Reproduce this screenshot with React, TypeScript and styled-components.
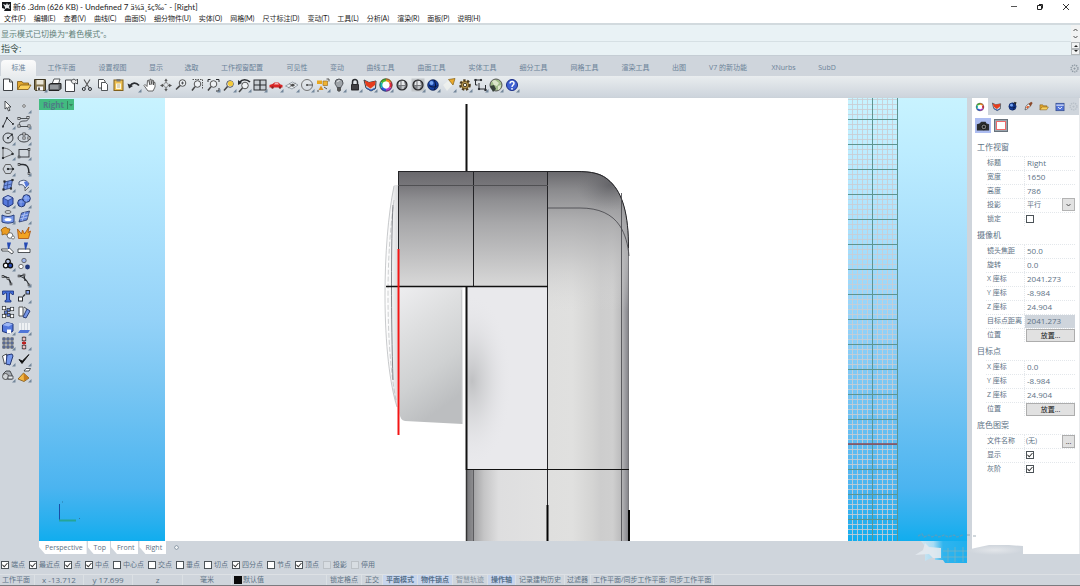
import React, { ReactNode } from 'react';
import styled, { createGlobalStyle, css } from 'styled-components';

const c = {
  chrome: '#cfd5dc',
  ink: '#5d7285',
  tab: '#6b8298',
  line: '#e3e7eb',
};

const Global = createGlobalStyle`
  * { box-sizing: border-box; }
  body { margin: 0; background: ${c.chrome}; }
  body, button, input, select {
    font-family: "Open Sans", "Noto Sans CJK SC", sans-serif;
    font-size: 7px;
    line-height: 10px;
    color: ${c.ink};
  }
  button, input, select { margin: 0; padding: 0; border: 0; background: none; outline: none; }
  h1, h2 { margin: 0; font-weight: 400; }
`;

const Page = styled.div`
  display: flex;
  flex-direction: column;
  min-height: 100vh;
  border-bottom: 1px solid #7b7b80;
`;

/* ---------- title and menus ---------- */

const TitleBar = styled.header`
  display: flex;
  align-items: center;
  height: 13px;
  padding: 0 10px 0 2px;
  gap: 2px;
  background: #fff;
  color: #222;
`;
const Title = styled.h1`
  flex: 1;
  font-family: Lato, "Noto Sans CJK SC", sans-serif;
  font-size: 8px;
  line-height: 12px;
  white-space: nowrap;
`;
const WindowButtons = styled.div`
  display: flex;
  gap: 18px;
`;
const WindowButton = styled.button`
  display: flex;
  width: 8px;
  height: 12px;
  align-items: center;
`;
const MenuBar = styled.nav`
  display: flex;
  height: 12px;
  padding: 0 4px;
  gap: 8px;
  align-items: center;
  background: #fff;
  border-bottom: 2px solid #d2dade;
`;
const MenuItem = styled.button`
  font-family: Lato, "Noto Sans CJK SC", sans-serif;
  color: #1c1c1c;
  white-space: nowrap;
`;

/* ---------- command area ---------- */

const CommandArea = styled.section`
  display: grid;
  grid-template-columns: 1fr 9px;
  background: #e9f2f5;
  border-bottom: 1px solid #c5cdd4;
`;
const History = styled.div`
  height: 17px;
  padding: 3px 1px;
  font-size: 8px;
  line-height: 12px;
  color: #5f7f78;
  border-bottom: 1px solid #d6e0e4;
`;
const Prompt = styled.label`
  display: flex;
  align-items: center;
  height: 13px;
  padding: 0 1px;
  gap: 3px;
  font-size: 9px;
  color: #42544f;
`;
const PromptInput = styled.input`
  flex: 1;
  font-size: 8px;
`;
const Stepper = styled.div<{ $framed?: boolean }>`
  display: grid;
  grid-template-rows: 1fr 1fr;
  padding: ${p => (p.$framed ? '0' : '1px 0')};
  background: #f1f2f2;
`;
const StepButton = styled.button<{ $framed?: boolean }>`
  display: grid;
  place-items: center;
  overflow: hidden;
  ${p => p.$framed && css`border: 1px solid #b5b8ba;`}
`;

/* ---------- toolbars ---------- */

const TabStrip = styled.div`
  display: flex;
  align-items: flex-end;
  height: 20px;
  padding: 0 1px;
`;
const ToolTab = styled.button<{ $w: number; $active?: boolean }>`
  width: ${p => p.$w}px;
  height: 16px;
  color: ${c.tab};
  white-space: nowrap;
  ${p => p.$active && css`
    border-radius: 4px 4px 0 0;
    background: linear-gradient(#fbfbfb, #e9ecee);
  `}
`;
const TabFill = styled.div`flex: 1;`;
const GearButton = styled.button`
  display: grid;
  place-items: center;
  width: 10px;
  height: 16px;
`;
const TopTools = styled.div`
  height: 22px;
  background: linear-gradient(#e9edef, #cdd4dc);
  border-bottom: 1px solid #cbd2d9;
`;
const TopToolGrid = styled.div`
  display: grid;
  grid-template-columns: repeat(33, 1fr);
  width: 520px;
  padding-top: 1px;
`;
const Tool = styled.button`
  display: grid;
  place-items: center;
  min-width: 0;
  min-height: 0;
  svg { display: block; }
`;
const Workspace = styled.main`
  display: grid;
  grid-template-columns: 39px 1fr 108px;
  flex: 1;
  min-height: 456px;
`;
const SideTools = styled.aside`
  display: grid;
  grid-template-columns: 16px 16px;
  grid-template-rows: repeat(18, minmax(0, 1fr));
  height: 285px;
`;

/* ---------- viewport ---------- */

const ViewColumn = styled.section`
  display: flex;
  flex-direction: column;
  min-width: 0;
  padding-right: 5px;
`;
const Viewport = styled.div`
  position: relative;
  flex: 1;
  min-height: 443px;
  background: #fff;
`;
const Scene = styled.svg`
  position: absolute;
  inset: 0;
  width: 100%;
  height: 100%;
`;
const ViewLabel = styled.button`
  position: absolute;
  left: 0;
  top: 1px;
  display: flex;
  align-items: center;
  justify-content: space-between;
  width: 35px;
  height: 11px;
  padding: 0 1px 0 4px;
  background: #42bb80;
  color: #4f7c86;
  font-size: 8px;
  font-weight: 700;
`;
const ViewTabs = styled.div`
  display: flex;
  height: 13px;
`;
const ViewTab = styled.button`
  height: 13px;
  padding: 0 4px 0 6px;
  margin-right: 1px;
  background: #fff;
  clip-path: polygon(0 0, 100% 0, 100% 100%, 6px 100%, 0 6px);
`;
const AddView = styled.button`
  display: grid;
  place-items: center;
  width: 18px;
`;

/* ---------- property panel ---------- */

const Panel = styled.aside`
  display: flex;
  flex-direction: column;
  background: #fff;
  border-right: 1px solid #e8eaec;
`;
const PanelTabs = styled.div`
  display: flex;
  height: 17px;
  background: ${c.chrome};
`;
const PanelTab = styled.button<{ $active?: boolean }>`
  display: grid;
  place-items: center;
  width: 16px;
  height: 17px;
  background: ${p => (p.$active ? '#fff' : 'transparent')};
`;
const PanelGear = styled.button`
  display: grid;
  place-items: center;
  width: 11px;
  opacity: .35;
`;
const ModeBar = styled.div`
  display: flex;
  gap: 2px;
  padding: 3px 3px 5px;
`;
const ModeButton = styled.button<{ $active?: boolean }>`
  display: grid;
  place-items: center;
  width: 16px;
  height: 15px;
  background: ${p => (p.$active ? '#adbdf1' : 'transparent')};
`;
const Group = styled.section``;
const GroupTitle = styled.h2`
  height: 18px;
  padding: 3px 5px;
  font-size: 8px;
  line-height: 12px;
`;
const Row = styled.div`
  display: grid;
  grid-template-columns: 39px 50px;
  height: 14px;
  margin: 0 4px 0 14px;
  border-top: 1px dotted ${c.line};
`;
const RowLabel = styled.label`
  padding: 1px 0 0 1px;
  border-right: 1px dotted ${c.line};
  white-space: nowrap;
`;
const Cell = styled.div<{ $shade?: boolean }>`
  position: relative;
  display: flex;
  align-items: center;
  height: 13px;
  background: ${p => (p.$shade ? '#cfd5dc' : 'transparent')};
  padding: 0 0 1px 1px;
`;
const Field = styled.input`
  width: 46px;
  padding-left: 1px;
  font-size: 8px;
`;
const Choice = styled.select`
  appearance: none;
  width: 48px;
  height: 12px;
  padding-left: 1px;
`;
const Badge = styled.span`
  position: absolute;
  right: 0;
  top: -1px;
  display: grid;
  place-items: center;
  width: 13px;
  height: 13px;
  border: 1px solid #b3b3b3;
  background: #e2e2e2;
  pointer-events: none;
`;
const PushButton = styled.button<{ $small?: boolean }>`
  width: ${p => (p.$small ? '13px' : '49px')};
  height: 13px;
  margin-left: ${p => (p.$small ? 'auto' : '0')};
  flex: none;
  border: 1px solid #adadad;
  background: #e1e1e1;
  color: #151515;
  line-height: 9px;
`;
const Tick = styled.input.attrs({ type: 'checkbox' })`
  appearance: none;
  display: grid;
  place-items: center;
  flex: none;
  width: 8px;
  height: 8px;
  border: 1px solid #4c5358;
  background: #fff;
  &:checked::before {
    content: "";
    width: 6px;
    height: 5px;
    background: #333;
    clip-path: polygon(0 50%, 12% 38%, 38% 72%, 90% 0, 100% 12%, 38% 100%);
  }
  &:disabled { border-color: #bcc1c6; background: #d8dde2; }
`;
const PanelFoot = styled.div`
  flex: 1;
`;
const SmudgeArt = styled.svg`
  position: absolute;
  right: -60px;
  bottom: -24px;
  width: 120px;
  height: 36px;
  pointer-events: none;
`;

/* ---------- footer ---------- */

const SnapBar = styled.div`
  display: flex;
  align-items: center;
  height: 20px;
  padding: 2px 1px 0;
  gap: 4px;
`;
const Snap = styled.label`
  display: flex;
  align-items: center;
  gap: 2px;
  white-space: nowrap;
`;
const StatusBar = styled.footer`
  display: flex;
  height: 11px;
  border-top: 1px solid #dde1e5;
  overflow: hidden;
`;
const StatusCell = styled.button<{ $w?: number; $on?: boolean; $dim?: boolean; $left?: boolean; $num?: boolean }>`
  display: flex;
  align-items: center;
  justify-content: ${p => (p.$left ? 'flex-start' : 'center')};
  gap: 1px;
  width: ${p => (p.$w ? `${p.$w}px` : 'auto')};
  padding: ${p => (p.$left ? '0 2px' : '0')};
  border-right: 1px solid #dbe0e4;
  white-space: nowrap;
  ${p => p.$num && css`font-size: 8px;`}
  ${p => p.$on && css`background: #c7d5ed; font-weight: 700; color: #56708a;`}
  ${p => p.$dim && css`color: #8593a0;`}
`;
const Swatch = styled.span`
  width: 8px;
  height: 8px;
  background: #0a0a0a;
`;

/* ---------- icons ---------- */

const K = '#2a2d31';
const B = '#5478dc';
const flyout = <path d="M15.5 12v3.5H12z" fill="#72869a" />;
const s = (d: string, color = K, w = 1) => <path d={d} stroke={color} strokeWidth={w} fill="none" />;
const dots = (pts: number[][], r = 1, f = '#fff') => pts.map(([x, y], i) => (
  <rect key={i} x={x - r} y={y - r} width={r * 2} height={r * 2} fill={f} stroke={K} strokeWidth=".7" />
));
const lens = (x: number, y: number) => (
  <g><circle cx={x} cy={y} r="3.3" fill="#eef1f4" stroke="#444" strokeWidth=".9" /><path d={`M${x - 2.5} ${y + 2.6}L3 ${y + 6.500}`} stroke="#444" strokeWidth="1.5" /></g>
);
const shield = (
  <g><path d="M2 3l5 2.5L14 4l-.5 7.500L9 14 4 11z" fill="#d4d7da" stroke="#303a44" /><path d="M2.500 3.500l4.500 2 6.500-1.500-.5 4L8.500 11.500 4 8.500z" fill="#e63c1c" /><path d="M4.500 11l4.500 2.300 4-2" stroke="#315fb4" strokeWidth="1.400" fill="none" /></g>
);
const wheel = (
  <g fill="none" strokeWidth="2.8">
    <path d="M8 3a5 5 0 0 1 4.300 2.500" stroke="#f08a1d" /><path d="M12.300 5.500a5 5 0 0 1 0 5" stroke="#e22a3a" />
    <path d="M12.300 10.500A5 5 0 0 1 8 13" stroke="#b03ad0" /><path d="M8 13a5 5 0 0 1-4.300-2.500" stroke="#2b58e0" />
    <path d="M3.700 10.500a5 5 0 0 1 0-5" stroke="#17b6ae" /><path d="M3.700 5.500A5 5 0 0 1 8 3" stroke="#4cbb2d" />
    <circle cx="8" cy="8" r="6.200" stroke="#333" strokeWidth=".7" /><circle cx="8" cy="8" r="3.400" fill="#fff" stroke="none" />
  </g>
);
const ball = (
  <g><circle cx="8" cy="8" r="5" fill="#77797d" stroke="#2a2a2c" strokeWidth="1.200" /><path d="M7.500 4h2.500l1 4H7.500zM5 5l1.500-.5V8H4.500z" fill="#e6e8ea" /><path d="M7.500 9h3.500l-1.500 3h-2z" fill="#c3c6c9" /><path d="M4.500 9h2v3z" fill="#94979b" /></g>
);
const blueBall = (
  <g><circle cx="8" cy="8" r="5.300" fill="#17409f" stroke="#0b1d4e" strokeWidth=".8" /><circle cx="6.500" cy="6" r="2" fill="#76a4f2" /><path d="M4 8.500c3 2 6 2 8.500 0M9 3c2 3 2 7 0 10" stroke="#071338" strokeWidth="1" fill="none" /></g>
);
const folder = (
  <g><path d="M1.500 12.500v-8h4.500l1 1.500h5.500v2" fill="#e2a72e" stroke="#7c5511" strokeWidth=".8" /><path d="M1.500 12.500L4.500 8H15l-2.800 4.500z" fill="#fbd15c" stroke="#7c5511" strokeWidth=".8" /></g>
);
const page = (x = 3.5, y = 2) => <path d={`M${x} ${y}h6l3 3v8.500h-9z`} fill="#fff" stroke={K} strokeWidth=".9" />;
const gear = (r: number, col: string, fill = 'none') => (
  <g><circle cx="8" cy="8" r={r} fill={fill} stroke={col} strokeWidth="2.600" strokeDasharray="2.200 1.600" /><circle cx="8" cy="8" r={r - 1} fill={fill} stroke={col} strokeWidth=".8" /></g>
);

const topIcons: [string, ReactNode, boolean?][] = [
  ['新建', <g>{page()}{s('M9.500 2v3h3', K, .8)}</g>],
  ['打开', folder],
  ['保存', <g><path d="M2.500 2.500h11v11h-10l-1-1z" fill="#84754f" stroke="#3b3522" /><path d="M4.500 3h7v4.500h-7z" fill="#e9e5d6" /><path d="M5 9.500h6v4H5z" fill="#f6f6f6" /><path d="M6 10.500h2v2.500H6z" fill="#555" /></g>, true],
  ['打印', <g><path d="M5 7l2-5h6l-1.500 5" fill="#fff" stroke={K} strokeWidth=".8" /><path d="M2 7.500l2-1h10v5l-2 2H2z" fill="#5f6367" stroke="#222" /><path d="M3 9h8.500M3 11h8.500" stroke="#d6dade" strokeWidth=".9" /></g>],
  ['属性', <g>{page(2.5, 3)}<path d="M8 3.500l3-1.500 2 1.500 1.500-1.500v5l-2-1-2 1-2-2z" fill="#e9e9e9" stroke={K} strokeWidth=".8" /></g>],
  ['剪切', <g>{s('M5 2.500l5 8M11 2.500l-5 8', '#555', 1.1)}<circle cx="4.800" cy="12" r="1.500" fill="none" stroke={K} /><circle cx="11" cy="12" r="1.500" fill="none" stroke={K} /></g>],
  ['复制', <g><path d="M3.500 2.500h5l1.500 1.500v7H3.500z" fill="#fff" stroke={K} strokeWidth=".8" /><path d="M6.500 5.500h4l2 2v6h-6z" fill="#fff" stroke={K} strokeWidth=".8" /></g>],
  ['粘贴', <g><rect x="4" y="3" width="9" height="10.500" fill="#eec052" stroke="#80601c" /><rect x="6.500" y="2" width="4" height="2.500" fill="#777" /><path d="M6 6.500h5v5.500H6z" fill="#fff8da" /><path d="M7 8h3M7 10h3" stroke="#888" strokeWidth=".6" /></g>],
  ['撤销', <g>{s('M4 9c2-3.500 6-4 9-.5', K, 1.800)}<path d="M1.500 6.500l1.500 5 4-2.500z" fill={K} /></g>, true],
  ['平移', <path d="M5 9.500L3 7.500 2 8.500 6 14h5l2-4V5.500l-1-.5-.5 3V3.500l-1.200-.5-.5 4.500L9 2 7.800 2.500 8 8 6.500 3l-1 .5z" fill="#fff" stroke="#444" strokeWidth=".8" />],
  ['旋转视图', <g>{s('M8 3v10M3 8.500h10', '#555', 1)}<path d="M8 1.500l1.700 2.500H6.300zM8 14.500l1.700-2.500H6.300zM2 8.500l3-1.700v3.400zM14 8.500l-3-1.700v3.400z" fill="#555" /><circle cx="8" cy="8" r="2.300" fill="#e1e6ea" stroke="#777" strokeWidth=".7" /></g>],
  ['动态缩放', <g>{lens(9.5, 6)}{s('M8 6h3M9.500 4.500v3', K, .7)}</g>],
  ['框选缩放', <g><path d="M3.500 2.500h10v9" stroke="#555" strokeDasharray="1.500 1" fill="none" />{lens(8.5, 7)}</g>],
  ['缩放至范围', <g>{s('M3 5V2.500h2.500M11 2.500h3V5M14 11v3h-3', K, 1)}{lens(8.5, 7)}</g>, true],
  ['缩放至选取', <g>{lens(9, 7)}<circle cx="9.500" cy="6.500" r="2.600" fill="#f4c93a" /></g>, true],
  ['复原视图', <g>{lens(9, 8.5)}{s('M4 5c2-3 7-3 10 0', K, 1.700)}<path d="M2 3v5l4-2z" fill={K} /></g>, true],
  ['四视图', <g><rect x="2" y="3" width="12" height="10" fill="#c8ced3" stroke={K} />{s('M8 3v10M2 8h12', K, 1.200)}</g>, true],
  ['车', <g><path d="M1.500 8l3-1 2-1.500h4l2 2 2 .5v2.500h-13z" fill="#d92424" /><path d="M7 6h3l1 1.500H6z" fill="#f5b7b7" /><circle cx="4.500" cy="10.500" r="1.200" fill="#822" /><circle cx="12" cy="10.500" r="1.200" fill="#822" /></g>, true],
  ['工作平面', <g><path d="M1.500 9l7-4 5.500 3-6 4z" fill="#e9edf0" stroke="#7e8891" strokeWidth=".7" />{s('M4 11l8-5M5 6.500l6 4.500', '#777', .7)}<path d="M6 8l3-1.500 2 2-3 1z" fill="#4a4a4a" /></g>, true],
  ['圆', <g><circle cx="8" cy="8" r="5.500" fill="none" stroke="#777" />{s('M8 8h6', '#555', 1)}<circle cx="8" cy="8" r="1" fill="#444" /></g>, true],
  ['物件', <g><path d="M2 3.500h5v3.500H2z" fill="#e8a61d" /><path d="M8 4h4.500v4.500H8z" fill="#efb234" stroke="#946414" strokeWidth=".6" /><path d="M6 8.500l2.500 4.500H3.500z" fill="#e0911a" />{s('M11.500 2H14v2.500M2 14h2M9 10l3 2', '#444', .9)}</g>, true],
  ['灯光', <g><path d="M4 6a4 4 0 0 1 8 0c0 2-2 3-2 4.500H6C6 9 4 8 4 6z" fill="#9fa4a9" stroke="#4c5055" /><path d="M6.500 5c.5-1 1-1.500 2-1.500" stroke="#fff" fill="none" /><path d="M6 11h4v2.500L8 15l-2-1.500z" fill="#555" /></g>, true],
  ['锁定', <g>{s('M5.500 7V5a2.500 2.500 0 0 1 5 0v2', K, 1.500)}<rect x="4" y="7" width="8" height="6.500" rx=".8" fill="#2c2c2f" /><path d="M5 9h6M5 11h6" stroke="#777" strokeWidth=".6" /></g>, true],
  ['图层', shield, true],
  ['颜色', wheel, true],
  ['着色', ball],
  ['着色模式', <g><rect x="1.500" y="1.500" width="13" height="13" fill="#c2c6c9" />{ball}</g>, true],
  ['渲染', blueBall, true],
  ['聚光灯', <g><path d="M2 8l6-5 4 4-6 7z" fill="#f4f5f0" opacity=".7" /><path d="M7.500 2.500l6.500-1L12 8z" fill="#eba92a" stroke="#805d15" strokeWidth=".7" /></g>, true],
  ['选项', <g>{gear(4.5, '#4c3c20', '#dcb65b')}<circle cx="8" cy="8" r="1.800" fill="#f1eee1" stroke="#3d321e" /></g>, true],
  ['尺寸', <g>{s('M2.500 3h5.500M2.500 3v5h2M6 6v6h6.500M12.500 8v5', K, 1)}{dots([[2.5, 3], [8, 3], [6, 12], [12.5, 13]], .7, K)}</g>, true],
  ['地球', <g><circle cx="8" cy="8" r="6" fill="#a2bd8b" stroke="#555" /><path d="M4 4l3-1 4 3-2 3-3-1zM10 9l3-1-1 4-2 1z" fill="#dce5cb" /><path d="M2 9l4-1 2 4-3 3z" fill="#37413a" /></g>, true],
  ['说明', <g><circle cx="8" cy="8" r="5.500" fill="#3f60d2" stroke="#1a2d86" />{s('M6 6.500c0-3 4.500-2.500 4 0C9.700 8 8 8 8 10', '#fff', 1.400)}<circle cx="8" cy="11.800" r=".9" fill="#fff" /></g>, true],
];

const sideIcons: [string, ReactNode, boolean?][] = [
  ['选取', <path d="M5 3v8l2-1.500L8.500 13l1.500-.7L8.500 9H11z" fill="#f8f8f8" stroke={K} strokeWidth=".8" />],
  ['点', <circle cx="8" cy="8" r="1.300" fill="#fff" stroke="#555" strokeWidth=".8" />, true],
  ['多重直线', <g>{s('M3 12.500L7 4l6 6', K, .9)}{dots([[3, 12.5], [7, 4], [13, 10]], .6, K)}</g>, true],
  ['曲线', <g>{s('M3 4.500h8.500M3 12.500h9.500M4 12c-2-4 1-5 4-5 4 0 4-1 4.500-3', K, .8)}{dots([[3, 4.5], [12, 3.500], [3, 12], [13, 12]], 1.1)}</g>, true],
  ['圆形', <g><circle cx="8" cy="8" r="5" fill="none" stroke={K} strokeWidth=".9" />{s('M8 8l4-3.500', K, .9)}{dots([[8, 8], [12, 4.500]], .6, K)}</g>, true],
  ['椭圆', <g><ellipse cx="8" cy="8" rx="6" ry="4" fill="none" stroke={K} strokeWidth=".9" />{dots([[8, 4], [8, 8], [13, 8]], 1.100)}</g>, true],
  ['圆弧', <g>{s('M3 13V3c5 0 9 3 10 6L3 13', '#555', .9)}{dots([[3, 3], [3, 13], [12.500, 9]], .7, K)}</g>, true],
  ['矩形', <g><rect x="3" y="4.500" width="10" height="7.500" fill="none" stroke={K} strokeWidth=".9" />{dots([[3, 12], [13, 4.500]], .9)}</g>, true],
  ['多边形', <g><path d="M3 8l2.500-4.500h5L13 8l-2.500 4.500h-5z" fill="none" stroke="#555" strokeWidth=".9" />{s('M8 8h5', K, .9)}{dots([[8, 8], [13, 8]], .7, K)}</g>, true],
  ['圆角', <g>{s('M3 3.500h4c4 0 6 2 6 9', K, 1.500)}{dots([[3, 3.500], [13, 12.500]], .9)}</g>, true],
  ['曲面', <g><path d="M4.500 5l8-2-1.500 8-7.500 2z" fill="#7596e8" stroke="#263b77" strokeWidth=".8" />{s('M3.500 9l8-2M8 4l-1 8', '#2f4788', .7)}{dots([[4.500, 4.500], [12.500, 3], [3.500, 12.500], [11, 11.500]], .7, K)}</g>, true],
  ['弯曲面', <g><path d="M3 5c4-3 8-2 10 2l-4 4C8 8 6 7 3 8z" fill="#e8edfa" stroke="#4b5874" /><path d="M8 5l3-1 2 4-3 2z" fill={B} />{s('M9 11v3l4-4', '#555', .8)}</g>, true],
  ['立方体', <g><path d="M3 5l5-2.500L13 5v6l-5 3-5-3z" fill={B} stroke="#20357e" /><path d="M3 5l5 2.500L13 5 8 2.500z" fill="#a7bdf6" stroke="#20357e" strokeWidth=".7" />{s('M8 7.500V14', '#20357e', .8)}</g>, true],
  ['布尔运算', <g><circle cx="5.500" cy="10" r="3.800" fill={B} stroke="#1e316c" /><circle cx="10.500" cy="5.500" r="3.800" fill="#6f93ee" stroke="#1e316c" />{s('M2.500 9h6M5 6.500v7M7.500 5h6M10 2v7', '#a9bff5', .6)}</g>, true],
  ['投影曲线', <g><ellipse cx="8" cy="3" rx="3" ry="1.500" fill="none" stroke="#555" strokeWidth=".8" /><path d="M2 6c4 2 8 2 12 0v7c-4 1.500-8 1.500-12 0z" fill="#7b9bed" stroke="#273e7d" /><ellipse cx="8" cy="10.500" rx="3.500" ry="1.600" fill="#fff" /></g>, true],
  ['网格', <g><path d="M5.500 4l8-2-2.500 9-8 2z" fill="#6485dc" stroke="#29396b" strokeWidth=".8" />{s('M4.500 7l8-2M3.500 10l8-2M9 3l-3 9', '#c3d1f8', .7)}</g>, true],
  ['炸开', <g><path d="M3 3l3-1 1 1.500L10 4l-1 3 1 2-3 1-2-1-3 1V7L1 5z" fill="#eb9c22" stroke="#7d4e0b" strokeWidth=".7" /><circle cx="10" cy="10.500" r="2.800" fill="#fff" stroke="#555" strokeWidth=".8" /><circle cx="13" cy="12.500" r="1.500" fill="#fff" stroke="#555" strokeWidth=".7" /></g>],
  ['爆炸', <path d="M2.500 13.500L1.500 4l4 5 1-4 2 4L13 2l-1 5.500 2.500-1.500-2 7.500z" fill="#f2a321" stroke="#a64e0c" strokeWidth=".8" />],
  ['修剪', <g><path d="M1.500 9h6l2-1 4 4-1.500 2-4-3h-6z" fill="#fff" stroke={K} strokeWidth=".8" /><path d="M7 2.500h4L9 9H8z" fill="#254ab4" /></g>],
  ['分割', <g><path d="M2 9h12v3.500H2z" fill="#fff" stroke={K} strokeWidth=".8" /><path d="M8 2.500h4l-2 7H9z" fill="#254ab4" /></g>],
  ['群组', <g><circle cx="8" cy="5.500" r="2.300" fill="#b8c6eb" stroke="#111" strokeWidth="1.200" /><circle cx="5.700" cy="9.500" r="2.300" fill="#fff" stroke="#111" strokeWidth="1.200" /><circle cx="10.300" cy="9.500" r="2.300" fill="#284cb5" stroke="#111" strokeWidth="1.200" /></g>, true],
  ['解散群组', <g><circle cx="8" cy="4.500" r="2.200" fill="#9eb4ed" stroke="#555" strokeWidth=".8" /><circle cx="5" cy="10.500" r="2.200" fill="#fff" stroke="#555" strokeWidth=".8" /><circle cx="11.500" cy="11" r="2.400" fill="#20377c" /></g>],
  ['编辑点', <g>{s('M3 4.500c5 0 7 3 8 8', K, 1.300)}{dots([[3, 4.500], [8, 6.500], [11, 12]], .9)}</g>],
  ['控制点', <g>{s('M3 4c5 1 8 4 10 9M8 3L3 4M8 3l1 6', K, 1.200)}{dots([[3, 4], [8, 3], [13, 13]], .9)}</g>, true],
  ['文字', <path d="M2.500 3h11v3.500H12L11 5H9.500v7l1.500.5V14H5v-1.500l1.500-.5V5H5L4 6.500H2.500z" fill="#456ed8" stroke="#18307a" strokeWidth=".8" />],
  ['移动', <g><rect x="2.500" y="9" width="4" height="4" fill="#fff" stroke={K} /><rect x="10" y="2.500" width="3.500" height="3.500" fill="#85a3f0" stroke={K} />{s('M7 8.500l2-2', K, 1.200)}</g>, true],
  ['阵列', <g>{dots([[4, 4], [12, 5], [4, 12], [12, 12]], 1.700)}{dots([[8.500, 6], [8.500, 11], [6, 8.500]], 1.500, '#5e80de')}</g>],
  ['旋转', <g><path d="M3 3h4v9H3z" fill="#fff" stroke="#555" /><path d="M7 13l4-8 3 2-4 7z" fill="#7696e7" stroke="#2c3d75" />{s('M8 3l3 2', K, .8)}</g>],
  ['抽面', <g><path d="M2.500 5L7 2.500 13 4v7l-4 2.500-6.500-2z" fill={B} stroke="#1c3277" /><path d="M2.500 5L7 2.500 13 4 8.500 6.500z" fill="#9db6f5" /><path d="M7 9.500h4v4H7z" fill="#fff" /></g>, true],
  ['法线', <g>{s('M4 3v8M7 3v8M10 3v8M13 3v8', '#fff', 1.300)}<path d="M2 13l2-3h10l-2 3z" fill="#4f75d7" /></g>, true],
  ['矩形阵列', <g>{dots([[4, 4], [8, 4], [12, 4], [4, 8], [8, 8], [12, 8], [4, 12], [8, 12], [12, 12]], 1.100, '#7c98e2')}</g>, true],
  ['对齐', <g>{s('M8 1.500v13', '#d22', 1.100)}{dots([[8, 4], [8, 12]], 1.800, '#eac1c1')}{s('M6 8h4', '#b22', 2)}</g>, true],
  ['弯曲', <g><path d="M2.500 5l4-2 1 8-3 2z" fill="#fff" stroke={K} strokeWidth=".8" /><path d="M7 4l5-1 1 2-3 9-4-1z" fill="#7698ec" stroke="#253873" /></g>, true],
  ['检查', <path d="M3 8.500L6 12.500 13 3.500 6.300 10z" fill="#111" stroke="#111" strokeWidth=".9" />, true],
  ['隐藏', <g><path d="M3 7l3-3h4l2 4v4H5z" fill="#a9aeb4" stroke={K} strokeWidth=".8" /><circle cx="5.500" cy="9.500" r="3" fill="#d1d5d8" stroke="#555" /><path d="M8 9h5v3H8z" fill="#e9ebed" stroke={K} strokeWidth=".7" /></g>, true],
  ['金字塔', <g><path d="M2 12l5.500-6L13 11l-5 3.500z" fill="#f3b643" stroke="#7b5416" strokeWidth=".8" /><path d="M7.500 6l.5 8 5-3z" fill="#c87e1c" /><path d="M8 4l2-2.500h4.500L13 4z" fill="#fff" stroke={K} strokeWidth=".8" /></g>, true],
];

const Icon = ({ children, fly, size = 16 }: { children: ReactNode; fly?: boolean; size?: number }) => (
  <svg width={size} height={size} viewBox="0 0 16 16" fill="none" aria-hidden="true">{children}{fly && flyout}</svg>
);

const Chevron = ({ up }: { up?: boolean }) => (
  <svg width="5" height="4" viewBox="0 0 5 4" fill="none"><path d={up ? 'M.5 3l2-2 2 2' : 'M.5 1l2 2 2-2'} stroke="#4c4c4c" /></svg>
);
const Arrow = ({ up }: { up?: boolean }) => (
  <svg width="4" height="3" viewBox="0 0 4 3"><path d={up ? 'M0 3l2-2 2 2z' : 'M0 0l2 2 2-2z'} fill="#222" /></svg>
);
const Cog = () => (
  <svg width="9" height="9" viewBox="0 0 16 16">{gear(6, '#8c97a2', '#d8dde2')}<circle cx="8" cy="8" r="2" fill="#8c97a2" /></svg>
);

/* ---------- 3D view ---------- */

const Stops = ({ list }: { list: [number, string, number?][] }) => (
  <>{list.map(([o, col, a], i) => <stop key={i} offset={o} stopColor={col} stopOpacity={a ?? 1} />)}</>
);
const range = (n: number) => Array.from({ length: n }, (_, i) => i);
const elbow = 'M548 171H576C592 171 602 173 610 181C623 193 629 215 629 248V541H548Z';

const Model = () => (
  <Scene viewBox="39 98 928 443" preserveAspectRatio="xMidYMid slice" role="img" aria-label="Right">
    <defs>
      <linearGradient id="sky" x1="0" y1="0" x2="0" y2="1"><Stops list={[[0, '#c8f3ff'], [.13, '#bcecff'], [.5, '#94d2f8'], [.65, '#79c6f3'], [.88, '#4bb4f0'], [.96, '#27afee'], [1, '#10adee']]} /></linearGradient>
      <linearGradient id="head" x1="0" y1="0" x2="0" y2="1"><Stops list={[[0, '#68676b'], [.12, '#77767a'], [.25, '#8f8f92'], [.45, '#a8a8aa'], [.7, '#bebebf'], [1, '#d9d9d9']]} /></linearGradient>
      <linearGradient id="pipe"><Stops list={[[0, '#dfdfde'], [.3, '#e0e0df'], [.55, '#d4d4d3'], [.65, '#cdcdcd'], [.8, '#cfcfcf'], [.9, '#bcbcbd'], [.96, '#98989d'], [1, '#7e7e83']]} /></linearGradient>
      <linearGradient id="elbowTop" x1="0" y1="0" x2="0" y2="1"><Stops list={[[0, '#68676b'], [.13, '#858588', .95], [.35, '#a6a6a8', .85], [.6, '#bdbdbe', .7], [1, '#d8d8d8', 0]]} /></linearGradient>
      <radialGradient id="elbowDark"><Stops list={[[0, '#55555a', .65], [1, '#77777a', 0]]} /></radialGradient>
      <radialGradient id="shadow"><Stops list={[[0, '#b9babc', .85], [.4, '#cbccce', .55], [1, '#e8e8ec', 0]]} /></radialGradient>
      <linearGradient id="foot"><Stops list={[[0, '#747477'], [.09, '#8d8d90'], [.1, '#a5a5a7'], [.22, '#c5c5c6'], [.4, '#dededf'], [1, '#e2e2e2']]} /></linearGradient>
      <linearGradient id="cap" x1="0" y1="0" x2=".35" y2="1"><Stops list={[[0, '#eeeef0'], [.35, '#dedfe0'], [.7, '#cfd1d2'], [1, '#bcbec0']]} /></linearGradient>
      <linearGradient id="disc"><Stops list={[[0, '#fff'], [.5, '#f6f6f7'], [1, '#d9dadc']]} /></linearGradient>
      <clipPath id="elbowClip"><path d={elbow} /></clipPath>
    </defs>
    <rect x="39" y="98" width="126" height="443" fill="url(#sky)" />
    <rect x="848" y="98" width="119" height="443" fill="url(#sky)" />
    <g stroke="#c9cdd2" strokeOpacity=".85">
      {range(9).map(i => <path key={i} d={`M${852.500 + i * 5} 98V541`} />)}
      {range(88).map(i => <path key={i} d={`M848 ${99.500 + i * 5}H897`} />)}
    </g>
    <g stroke="#5f948f">
      <path d="M872.500 98V541M897.500 98V541" />
      {range(17).map(i => <path key={i} d={`M848 ${119.500 + i * 25}H897`} />)}
      <path d="M848 444H897" stroke="#8a4a5c" strokeWidth="1.500" />
    </g>

    <path d="M59.500 504V521" stroke="#1a4fa6" /><path d="M59 520.500H76" stroke="#25a597" strokeWidth="2" />
    <path d="M62 502h1M79 518.500h1" stroke="#2b7aa6" />

    <path d="M394 185C388 215 385 255 385 295C385 345 390 385 397 407L398 185Z" fill="url(#disc)" />
    <g fill="none" stroke="#a8abae" strokeWidth=".9">
      <path d="M394 186C388 215 385 255 385 295C385 345 390 385 397 407" strokeOpacity=".7" />
      <path d="M394 200C390 230 388 260 388 295C388 340 391 375 396 400" strokeDasharray="5 2" strokeOpacity=".6" />
      <path d="M393 205C391 240 391 320 393 380" stroke="#777b80" />
    </g>
    <path d="M398 287H462.500V424L405 421Q400 420 399.500 413Z" fill="url(#cap)" />
    <path d="M461.500 290V422" stroke="#c5c7c9" strokeWidth=".8" />
    <rect x="467" y="287" width="81" height="182" fill="#e9e9ec" />
    <clipPath id="bodyClip"><rect x="467" y="287" width="81" height="182" /></clipPath>
    <ellipse cx="472" cy="381" rx="40" ry="86" fill="url(#shadow)" clipPath="url(#bodyClip)" />
    <rect x="466" y="470" width="82" height="71" fill="url(#foot)" />
    <path d={elbow} fill="url(#pipe)" />
    <g clipPath="url(#elbowClip)">
      <rect x="548" y="171" width="82" height="140" fill="url(#elbowTop)" />
      <ellipse cx="610" cy="185" rx="34" ry="26" fill="url(#elbowDark)" />
    </g>
    <rect x="398" y="171" width="150" height="116" fill="url(#head)" />
    <g fill="none" stroke="#242427">
      <path d="M466.500 104V171M466.500 287V470" stroke="#111" strokeWidth="2" />
      <path d="M466.500 470V541" stroke="#333" strokeWidth="1.500" />
      <path d="M398.500 171.500H576C592 171.500 602 173.500 610 181.500C623 193.500 628.500 215 628.500 248" />
      <path d="M628.500 248V541" stroke="#77777b" />
      <path d="M398.500 171V250M473.500 171V286M547.500 171V541" />
      <path d="M398 185.500H548" stroke="#505053" />
      <path d="M548 208H580C599 208 612 214 620 226C625 234 628 244 629 256M621.500 193V541" strokeWidth=".8" stroke="#424247" />
      <path d="M386 286.500H548" stroke="#111" strokeWidth="1.500" />
      <path d="M466 469.500H629" stroke="#111" />
      <path d="M473.500 470V541" stroke="#5b5b5e" />
      <path d="M547.500 505V541M629 510V541" stroke="#050505" strokeWidth="2" />
    </g>
    <path d="M398.500 249V435" stroke="#f31515" strokeWidth="2" />
  </Scene>
);

const Smudge = () => (
  <SmudgeArt viewBox="0 0 120 36" aria-hidden="true">
    <defs>
      <linearGradient id="patch"><Stops list={[[0, '#d9e6ee'], [.3, '#a8dcf4'], [.5, '#30b4ee'], [1, '#1fb0ee']]} /></linearGradient>
      <radialGradient id="haze"><Stops list={[[0, '#e3e6ea'], [1, '#cfd5dc']]} /></radialGradient>
    </defs>
    <path d="M14 12h46v22H38l-2-3h-8v-4l-10 5v-7h-6l8-5z" fill="url(#patch)" />
    <path d="M33 18v12M41 19v14M48 18v15M56 18v15M36 22h24M36 28h24" stroke="#7fb3bf" strokeWidth=".7" />
    <path d="M18 14l4 4 12 1v10h-8l-4-4-14 1 8-5z" fill="#e3e9ee" opacity=".9" />
    <path d="M60 21l8-2 14-3h20l14 1v9H60z" fill="url(#haze)" />
    <path d="M11 7l4-2 2 3 5-2 3 2 4-2 3 2 5-2 4 2 6-2 3 2 6-2M60 6h3M66 7h3" stroke="#8295a3" strokeWidth="1.500" strokeOpacity=".5" strokeDasharray="3 1" fill="none" />
  </SmudgeArt>
);

/* ---------- data ---------- */

const menus = ['文件(F)', '编辑(E)', '查看(V)', '曲线(C)', '曲面(S)', '细分物件(U)', '实体(O)', '网格(M)', '尺寸标注(D)', '变动(T)', '工具(L)', '分析(A)', '渲染(R)', '面板(P)', '说明(H)'];
const tabs: [string, number][] = [
  ['标准', 35], ['工作平面', 51], ['设置视图', 51], ['显示', 36], ['选取', 35], ['工作视窗配置', 66], ['可见性', 44], ['变动', 36],
  ['曲线工具', 51], ['曲面工具', 51], ['实体工具', 51], ['细分工具', 51], ['网格工具', 51], ['渲染工具', 51], ['出图', 36], ['V7 的新功能', 62], ['XNurbs', 49], ['SubD', 38],
];
const snaps: [string, boolean, boolean?][] = [
  ['端点', true], ['最近点', true], ['点', true], ['中点', true], ['中心点', false], ['交点', false], ['垂点', false],
  ['切点', false], ['四分点', true], ['节点', false], ['顶点', true], ['投影', false, true], ['停用', false, true],
];
type Kind = 'text' | 'select' | 'check' | 'place' | 'file';
const groups: [string, [string, string, Kind?][]][] = [
  ['工作视窗', [['标题', 'Right'], ['宽度', '1650'], ['高度', '786'], ['投影', '平行', 'select'], ['锁定', '', 'check']]],
  ['摄像机', [['镜头焦距', '50.0'], ['旋转', '0.0'], ['X 座标', '2041.273'], ['Y 座标', '-8.984'], ['Z 座标', '24.904'], ['目标点距离', '2041.273'], ['位置', '', 'place']]],
  ['目标点', [['X 座标', '0.0'], ['Y 座标', '-8.984'], ['Z 座标', '24.904'], ['位置', '', 'place']]],
  ['底色图案', [['文件名称', '(无)', 'file'], ['显示', 'on', 'check'], ['灰阶', 'on', 'check']]],
];

const Property = ({ id, label, value, kind = 'text' }: { id: string; label: string; value: string; kind?: Kind }) => (
  <Row>
    <RowLabel htmlFor={id}>{label}</RowLabel>
    <Cell $shade={label === '目标点距离'}>
      {kind === 'text' && <Field id={id} defaultValue={value} />}
      {kind === 'select' && <><Choice id={id}><option>{value}</option></Choice><Badge><Chevron /></Badge></>}
      {kind === 'check' && <Tick id={id} defaultChecked={value === 'on'} />}
      {kind === 'place' && <PushButton id={id}>放置...</PushButton>}
      {kind === 'file' && <><span>{value}</span><PushButton $small id={id}>...</PushButton></>}
    </Cell>
  </Row>
);

export default function App() {
  return (
    <Page>
      <Global />
      <TitleBar>
        <svg width="9" height="9" viewBox="0 0 9 9"><rect width="9" height="9" fill="#15171a" /><path d="M1 2l3 1 1-2 1 2 2-1-1 3 1 2-3-1-2 1V5z" fill="#e8eaec" /><path d="M0 6l3 1-1 2H0z" fill="#fff" /></svg>
        <Title>新6 .3dm (626 KB) - Undefined 7 ä¼ä¸šç‰ˆ - [Right]</Title>
        <WindowButtons>
          <WindowButton aria-label="最小化"><svg width="8" height="8" viewBox="0 0 8 8"><path d="M1 3.500h6" stroke="#555" /></svg></WindowButton>
          <WindowButton aria-label="还原"><svg width="8" height="8" viewBox="0 0 8 8" fill="none" stroke="#222"><path d="M1.500 2.500h4v4h-4zM3 1.500h3.500V5.500" /></svg></WindowButton>
          <WindowButton aria-label="关闭"><svg width="8" height="8" viewBox="0 0 8 8"><path d="M1 1l6 6M7 1L1 7" stroke="#333" /></svg></WindowButton>
        </WindowButtons>
      </TitleBar>
      <MenuBar>{menus.map(m => <MenuItem key={m}>{m}</MenuItem>)}</MenuBar>

      <CommandArea>
        <History>显示模式已切换为"着色模式"。</History>
        <Stepper><StepButton aria-label="上卷"><Chevron up /></StepButton><StepButton aria-label="下卷"><Chevron /></StepButton></Stepper>
        <Prompt>指令:<PromptInput /></Prompt>
        <Stepper $framed><StepButton $framed aria-label="上一条"><Arrow up /></StepButton><StepButton $framed aria-label="下一条"><Arrow /></StepButton></Stepper>
      </CommandArea>

      <TabStrip>
        {tabs.map(([t, w], i) => <ToolTab key={t} $w={w} $active={i === 0}>{t}</ToolTab>)}
        <TabFill />
        <GearButton aria-label="选项"><Cog /></GearButton>
      </TabStrip>
      <TopTools>
        <TopToolGrid>
          {topIcons.map(([n, art, fly]) => <Tool key={n} aria-label={n}><Icon fly={fly}>{art}</Icon></Tool>)}
        </TopToolGrid>
      </TopTools>

      <Workspace>
        <SideTools>
          {sideIcons.map(([n, art, fly]) => <Tool key={n} aria-label={n}><Icon fly={fly}>{art}</Icon></Tool>)}
        </SideTools>
        <ViewColumn>
          <Viewport>
            <Model />
            <ViewLabel>Right<svg width="6" height="8" viewBox="0 0 6 8"><path d="M.5 0v8" stroke="#36855f" /><path d="M2 3h4L4 5.500z" fill="#36855f" /></svg></ViewLabel>
            <Smudge />
          </Viewport>
          <ViewTabs>
            {['Perspective', 'Top', 'Front', 'Right'].map(v => <ViewTab key={v}>{v}</ViewTab>)}
            <AddView aria-label="新增"><svg width="7" height="7" viewBox="0 0 7 7"><path d="M3.500 1v5M1 3.500h5" stroke="#9ca8b3" strokeWidth="2" /><path d="M3.500 2v3M2 3.500h3" stroke="#eef1f3" /></svg></AddView>
          </ViewTabs>
        </ViewColumn>
        <Panel>
          <PanelTabs>
            <PanelTab $active aria-label="颜色"><Icon size={10}>{wheel}</Icon></PanelTab>
            <PanelTab aria-label="图层"><Icon size={11}>{shield}</Icon></PanelTab>
            <PanelTab aria-label="渲染"><Icon size={11}>{blueBall}<path d="M10 1l4 1-2 4z" fill="#222" /></Icon></PanelTab>
            <PanelTab aria-label="材质"><Icon size={11}><path d="M3 13l1-5 4-4 3 3-4 4z" fill="#f7f7f7" stroke="#444" /><path d="M8 4l4-3 2 2-3 5z" fill="#8b4a2b" /><path d="M4 9l3 2 2-3-2-1z" fill="#e05a2a" /></Icon></PanelTab>
            <PanelTab aria-label="库"><Icon size={10}>{folder}</Icon></PanelTab>
            <PanelTab aria-label="显示"><Icon size={10}><rect x="1.500" y="2" width="13" height="12" fill="#5475d8" stroke="#29407f" /><path d="M2 5h12M5 8l3 3 3-3" stroke="#fff" strokeWidth="1.500" /></Icon></PanelTab>
            <PanelGear aria-label="面板选项"><Cog /></PanelGear>
          </PanelTabs>
          <ModeBar>
            <ModeButton $active aria-label="相机"><Icon size={14}><path d="M1 6l3-1 2-2h5l1 2 3 1v7H1z" fill="#2b2d30" /><circle cx="9" cy="9" r="3.300" fill="#777" stroke="#111" /><circle cx="9" cy="9" r="1.300" fill="#15171a" /></Icon></ModeButton>
            <ModeButton aria-label="视窗"><svg width="14" height="13" viewBox="0 0 14 13"><rect x=".5" y=".5" width="13" height="12" fill="#9aa6b0" stroke="#68727b" /><rect x="2.500" y="2.500" width="9" height="8" fill="#fff" stroke="#ef6a6a" /></svg></ModeButton>
          </ModeBar>
          {groups.map(([title, rows], g) => (
            <Group key={title}>
              <GroupTitle>{title}</GroupTitle>
              {rows.map(([label, value, kind], i) => <Property key={label} id={`p${g}-${i}`} label={label} value={value} kind={kind} />)}
            </Group>
          ))}
          <PanelFoot />
        </Panel>
      </Workspace>

      <SnapBar>
        {snaps.map(([t, on, off]) => <Snap key={t}><Tick defaultChecked={on} disabled={off} />{t}</Snap>)}
      </SnapBar>
      <StatusBar>
        <StatusCell $w={35} $left>工作平面</StatusCell>
        <StatusCell $w={49} $num>x -13.712</StatusCell>
        <StatusCell $w={49} $num>y 17.699</StatusCell>
        <StatusCell $w={50} $num>z</StatusCell>
        <StatusCell $w={49}>毫米</StatusCell>
        <StatusCell $w={95} $left><Swatch />默认值</StatusCell>
        <StatusCell $w={35}>锁定格点</StatusCell>
        <StatusCell $w={21}>正交</StatusCell>
        <StatusCell $w={35} $on>平面模式</StatusCell>
        <StatusCell $w={35} $on>物件锁点</StatusCell>
        <StatusCell $w={35} $dim>智慧轨迹</StatusCell>
        <StatusCell $w={28} $on>操作轴</StatusCell>
        <StatusCell $w={49}>记录建构历史</StatusCell>
        <StatusCell $w={26}>过滤器</StatusCell>
        <StatusCell $left>工作平面/同步工作平面: 同步工作平面</StatusCell>
      </StatusBar>
    </Page>
  );
}
